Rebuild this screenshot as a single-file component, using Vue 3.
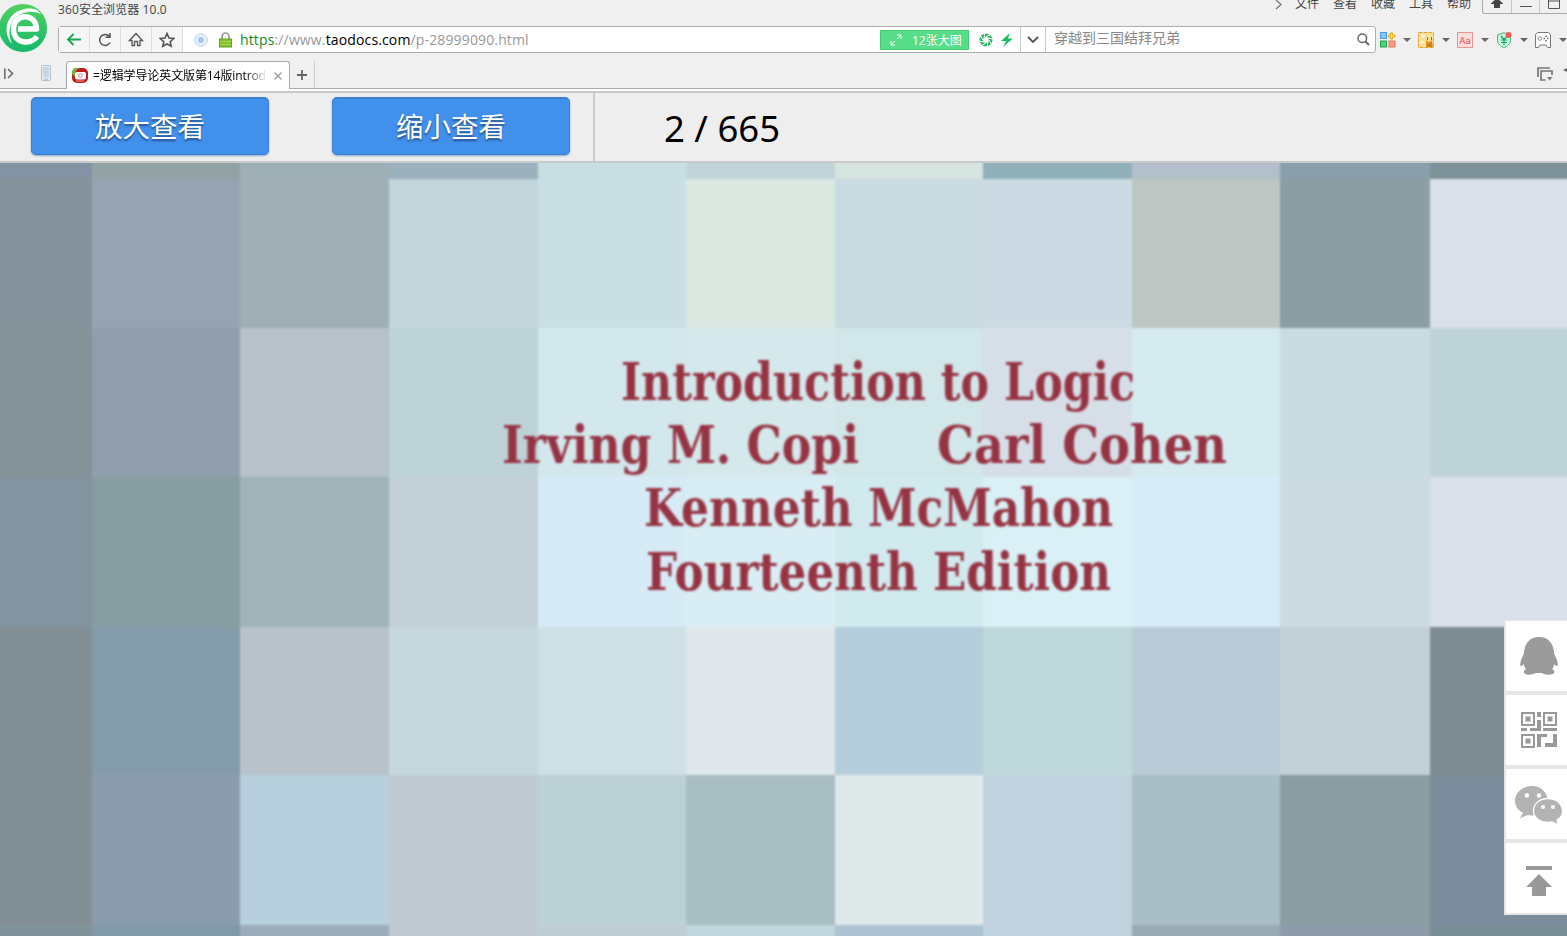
<script setup>
const menus = ["文件", "查看", "收藏", "工具", "帮助"];

// Cover artwork: one array per row, one colour per tile.
const tiles = [
  ["#8493a3", "#93a3a5", "#9fafb6", "#9bb1be", "#c7dfe0", "#c0d3d9", "#d5e4df", "#91b1ba", "#b3bfca", "#899fab", "#7d9299"],
  ["#84939b", "#96a3b1", "#9fafb5", "#c1d5db", "#c9dfe4", "#dae8e1", "#c7dbe0", "#ccdbe3", "#bdc6c3", "#8a9ea3", "#d9e0ea"],
  ["#849398", "#919fad", "#b6c1ca", "#bdd3d8", "#d3e8ec", "#d5e8ec", "#d1e7e9", "#d6dfe8", "#d6ebf0", "#c8dce1", "#bdd3d8"],
  ["#8194a0", "#889da1", "#9fb3b8", "#c3d0d7", "#d7ebf7", "#d8eef4", "#d1eaee", "#d9f1f6", "#d6ecf7", "#ccdbe2", "#dadfea"],
  ["#829095", "#849caa", "#b8c2cb", "#c5d8de", "#cfdfe6", "#e0e7ea", "#b5cedc", "#bed7da", "#b8cbd7", "#c3d0d8", "#7d8b92"],
  ["#829095", "#8b9dad", "#b8d0de", "#c1cad3", "#bcd1d6", "#a9bec3", "#e0e9ea", "#c0d3de", "#aabfc5", "#899da2", "#7b8c9c"],
  ["#80939a", "#8299a9", "#9badb9", "#c1c9d2", "#bfced5", "#c0d5dc", "#adc3d1", "#c0d3df", "#9aabb6", "#8e9ba9", "#788d96"],
];
</script>

<template>
  <div class="browser">
    <header class="chrome">
      <svg class="logo" width="48" height="50" viewBox="0 0 48 50">
        <defs>
          <linearGradient id="lg" x1="0" y1="0" x2="0" y2="1">
            <stop offset="0" stop-color="#4fd160" />
            <stop offset="1" stop-color="#17b86c" />
          </linearGradient>
        </defs>
        <circle cx="23" cy="25" r="24" fill="url(#lg)" />
        <path d="M18 26H36.500C36 9 13 10 13.500 27C14 41 31 42 37 33.500" fill="none" stroke="#fff" stroke-width="5.500" stroke-linejoin="round" />
        <path d="M12 41C1 28 7 8 27 5.500C34 5 39 7 41 11.500C34 7 22 8 14 16C9 22 8 31 12 41Z" fill="#fff" />
      </svg>

      <div class="title-row">
        <span class="title">360安全浏览器 10.0</span>
        <svg class="more" width="8" height="12" viewBox="0 0 8 12"><path d="M1 0L6 4.500L1 9" fill="none" stroke="#777" stroke-width="1.3" /></svg>
        <nav class="menus">
          <span v-for="m in menus" :key="m">{{ m }}</span>
        </nav>
        <div class="win">
          <span><svg width="12" height="10" viewBox="0 0 12 10"><path d="M0 3.500L6-2L12 3.500V4H9V8H3V4H0Z" fill="#444" /></svg></span>
          <span><svg width="13" height="10" viewBox="0 0 13 10"><path d="M0 6.500H12" stroke="#555" /></svg></span>
          <span><svg width="13" height="10" viewBox="0 0 13 10"><path d="M.5-2V8.500H11.500V-2M0 1H12" fill="none" stroke="#555" /></svg></span>
        </div>
      </div>

      <div class="address-row">
        <div class="address">
          <button class="nav-btn">
            <svg width="16" height="16" viewBox="0 0 16 16"><path d="M15 7.500H2M7.500 2L2 7.500L7.500 13" fill="none" stroke="#12a84c" stroke-width="1.800" /></svg>
          </button>
          <button class="nav-btn">
            <svg width="16" height="16" viewBox="0 0 16 16"><path d="M13 10.500A5.500 5.500 0 1 1 12.300 4.300M13 1V5.200H8.500" fill="none" stroke="#555" stroke-width="1.500" /></svg>
          </button>
          <button class="nav-btn">
            <svg width="16" height="16" viewBox="0 0 16 16"><path d="M1.500 8.500L8 1.500L14.500 8.500H12V13.500H9.500V9.500H6.500V13.500H4V8.500Z" fill="none" stroke="#555" stroke-width="1.300" /></svg>
          </button>
          <button class="nav-btn">
            <svg width="16" height="16" viewBox="0 0 16 16"><path d="M8 1.500L10 6L14.700 6.500L11.200 9.700L12.200 14.300L8 12L3.800 14.300L4.800 9.700L1.300 6.500L6 6Z" fill="none" stroke="#555" stroke-width="1.600" /></svg>
          </button>
          <svg class="site" width="14" height="14" viewBox="0 0 14 14">
            <circle cx="7" cy="7" r="6.500" fill="#dfebfd" stroke="#c8dbf8" />
            <circle cx="7" cy="7" r="3.700" fill="#a4c4f7" stroke="#fff" />
          </svg>
          <svg class="lock" width="13" height="16" viewBox="0 0 13 16">
            <path d="M3 8V4.500A3.500 3.500 0 0 1 10 4.500V8" fill="none" stroke="#999" stroke-width="1.700" />
            <rect x=".5" y="7" width="12" height="8" fill="#83c32d" stroke="#649f21" />
            <path d="M1 9.500H12M1 12.500H12" stroke="#a1d653" />
          </svg>
          <span class="url"><i class="secure">https</i>://www.<b>taodocs.com</b>/p-28999090.html</span>
          <span class="tag">
            <svg width="12" height="12" viewBox="0 0 12 12"><path d="M7 1H11V5M11 1L7 5M5 11H1V7M1 11L5 7" fill="none" stroke="#fff" /></svg>
            12张大图
          </span>
          <svg class="swirl" width="14" height="14" viewBox="0 0 14 14">
            <circle cx="7" cy="7" r="4.700" fill="none" stroke="#28b665" stroke-width="3.600" />
            <path d="M5 5L6 0M7 4L12 1M9 5L14 6M10 7L13 12M9 9L8 14M7 10L2 13M5 9L0 8M4 7L1 2" stroke="#fff" stroke-width="1" />
          </svg>
          <svg class="bolt" width="12" height="14" viewBox="0 0 12 14"><path d="M9 0L0 8H5L2 14L12 5.500H7Z" fill="#1fbd68" /></svg>
          <span class="drop">
            <svg width="12" height="8" viewBox="0 0 12 8"><path d="M1 1L6 6L11 1" fill="none" stroke="#555" stroke-width="1.800" /></svg>
          </span>
          <span class="query">穿越到三国结拜兄弟</span>
          <svg class="search" width="13" height="13" viewBox="0 0 13 13"><circle cx="5.300" cy="5.300" r="4.300" fill="none" stroke="#666" stroke-width="1.500" /><path d="M8.500 8.500L12 12" stroke="#666" stroke-width="2" /></svg>
        </div>

        <div class="exts">
          <div class="ext">
            <svg width="16" height="16" viewBox="0 0 16 16">
              <rect x=".5" y=".5" width="6" height="6" fill="#8bc7f5" stroke="#45a0e6" />
              <path d="M10.500 1H12.500V3H15V5H12.500V7H10.500V5H8.500V3H10.500Z" fill="#ffe36a" stroke="#e3a516" />
              <rect x=".5" y="9" width="6" height="6" fill="#58cf7b" stroke="#14a74b" />
              <rect x="9" y="9" width="6" height="6" fill="#f99a86" stroke="#ec705b" />
            </svg>
            <i class="caret" />
          </div>
          <div class="ext">
            <svg width="16" height="16" viewBox="0 0 16 16">
              <rect x=".5" y=".5" width="15" height="15" fill="#fbe09a" stroke="#e4a62a" stroke-dasharray="4 1" />
              <circle cx="5" cy="4" r="1.800" fill="#fff5d0" /><circle cx="4" cy="10" r="1.500" fill="#fff5d0" />
              <path d="M8 15V8L11 10L14 8L15 15Z" fill="#ed9b28" />
              <path d="M9.500 5V8M13.500 5V8M9 11L11 13L14 11M9 14H14" fill="none" stroke="#9c681d" />
            </svg>
            <i class="caret" />
          </div>
          <div class="ext">
            <svg width="16" height="16" viewBox="0 0 16 16">
              <rect x=".5" y=".5" width="15" height="15" fill="#ffdede" stroke="#e99590" />
              <text x="2.200" y="11.700" font-size="9.500" font-family="Roboto, sans-serif" fill="#d94f4f">Aa</text>
            </svg>
            <i class="caret" />
          </div>
          <div class="ext">
            <svg width="16" height="16" viewBox="0 0 16 16">
              <path d="M8 .7L14.500 3V8C14.500 12 11 14.500 8 15.500C5 14.500 1.500 12 1.500 8V3Z" fill="#caf5dc" stroke="#39bf7b" />
              <path d="M5 4L8 7.500L11 4M8 7V13M5 8H11M5 10.500H11" fill="none" stroke="#12a75c" stroke-width="1.200" />
              <circle cx="12.500" cy="3" r="3" fill="#f75959" />
            </svg>
            <i class="caret" />
          </div>
          <div class="ext">
            <svg width="16" height="16" viewBox="0 0 16 16">
              <path d="M2.500.5H13.500L15.500 2.500V15.500H12.500L11 13H5L3.500 15.500H.5V2.500Z" fill="#fff" stroke="#777" />
              <circle cx="4.800" cy="6.500" r="1.800" fill="none" stroke="#888" />
              <path d="M11 3.500V5M11 8V9.500M8.500 6.500H10M12 6.500H13.500" stroke="#666" stroke-width="1.500" />
            </svg>
            <i class="caret" />
          </div>
        </div>
      </div>

      <div class="tab-row">
        <svg class="panel" width="12" height="12" viewBox="0 0 12 12"><path d="M.8.5V11M4 1L8.500 5.500L4 10" fill="none" stroke="#666" stroke-width="1.500" /></svg>
        <svg class="phone" width="10" height="16" viewBox="0 0 10 16">
          <rect x=".5" y=".5" width="9" height="15" rx="1" fill="#e6ebf0" stroke="#b3bfca" />
          <rect x="2" y="2" width="6" height="10" fill="#c4d6e6" />
          <path d="M3 14H7" stroke="#9fb2c4" />
        </svg>
        <div class="tab">
          <svg width="16" height="16" viewBox="0 0 16 16">
            <rect width="16" height="15" rx="5" fill="#bf1a1f" />
            <path d="M0 6V4Q0 0 5 0H8Q2 2 3 9Z" fill="#7cae46" />
            <rect x="3" y="4" width="11" height="7.500" rx="2" fill="#fff" />
            <circle cx="8.500" cy="7.500" r="1.800" fill="#fff" stroke="#e57777" />
            <path d="M5 6H6M11 6H12M4 13H12" stroke="#e99" />
          </svg>
          <span class="tab-title">=逻辑学导论英文版第14版introduction</span>
          <svg class="close" width="8" height="8" viewBox="0 0 8 8"><path d="M.5.5L7.500 7.500M7.500.5L.5 7.500" stroke="#999" stroke-width="1.200" /></svg>
        </div>
        <div class="new-tab">
          <svg width="10" height="10" viewBox="0 0 10 10"><path d="M5 0V10M0 5H10" stroke="#666" stroke-width="1.800" /></svg>
        </div>
        <svg class="restore" width="17" height="15" viewBox="0 0 17 15">
          <path d="M1 10V1H13M8.500 13H4V4H15V8" fill="none" stroke="#777" stroke-width="1.700" />
          <path d="M10 10L15.500 10L12.750 13.500Z" fill="#777" />
        </svg>
        <svg class="undo" width="4" height="8" viewBox="0 0 4 8"><path d="M0 3L4 1V5Z" fill="#666" /></svg>
      </div>
    </header>

    <div class="toolbar">
      <button class="zoom-btn">放大查看</button>
      <button class="zoom-btn">缩小查看</button>
      <div class="pager">2 / 665</div>
    </div>

    <main class="viewer">
      <div class="mosaic">
        <template v-for="(row, r) in tiles" :key="r">
          <div v-for="(color, c) in row" :key="c" :style="{ background: color }" />
        </template>
      </div>
      <svg class="cover-text" width="1567" height="773" viewBox="0 163 1567 773">
        <text x="621" y="400" textLength="514" lengthAdjust="spacingAndGlyphs">Introduction to Logic</text>
        <text x="502" y="463" textLength="357" lengthAdjust="spacingAndGlyphs">Irving M. Copi</text>
        <text x="937" y="463" textLength="290" lengthAdjust="spacingAndGlyphs">Carl Cohen</text>
        <text x="644" y="526" textLength="469" lengthAdjust="spacingAndGlyphs">Kenneth McMahon</text>
        <text x="646" y="590" textLength="465" lengthAdjust="spacingAndGlyphs">Fourteenth Edition</text>
      </svg>
    </main>

    <aside class="side">
      <div class="side-item">
        <svg width="38" height="38" viewBox="0 0 38 38" fill="#9b9b9b">
          <path d="M19 0C28 0 33 6 34 15C34 18 36 20 37 23C38 27 38 29 37 29C36 29 35 28 34 27C34 30 33 31 32 32C34 33 36 35 33 37C29 38 25 38 22 36H16C12 38 8 38 5 37C3 35 4 33 6 32C5 31 4 30 4 27C3 28 2 29 1 29C0 29 0 27 1 23C2 20 4 18 4 15C5 6 10 0 19 0Z" />
        </svg>
      </div>
      <div class="side-item">
        <svg width="36" height="36" viewBox="0 0 36 36">
          <g fill="none" stroke="#999" stroke-width="2">
            <rect x="1" y="1" width="12" height="12" /><rect x="23" y="1" width="12" height="12" /><rect x="1" y="23" width="12" height="12" />
          </g>
          <g fill="#999">
            <rect x="4.500" y="4.500" width="5" height="5" /><rect x="26.500" y="4.500" width="5" height="5" /><rect x="4.500" y="26.500" width="5" height="5" />
            <path d="M16 0H20V5H16ZM16 8H20V19H9V16H16ZM0 16H6V19H0ZM22 16H36V19H22ZM16 22H26V25H20V35H16ZM32 22H36V35H24V31H32Z" />
          </g>
        </svg>
      </div>
      <div class="side-item">
        <svg class="wechat" width="48" height="40" viewBox="0 0 48 40">
          <path d="M17 0C7 0 0 7 0 15C0 20 3 24 8 27L5 32L13 29C27 32 34 23 33 15C32 6 26 0 17 0Z" fill="#b3b3b3" />
          <path d="M33 12.500C24 12.500 18.500 18 18.500 25C18.500 33 28 38 37 36L43.500 39L42 34C46 32 48 28 47.500 24C46.500 17 41 12.500 33 12.500Z" fill="#b3b3b3" stroke="#fff" stroke-width="1.300" />
          <g fill="#fff"><circle cx="12" cy="9.500" r="2.200" /><circle cx="24" cy="9.500" r="2.200" /><circle cx="28" cy="21" r="2" /><circle cx="38" cy="21" r="2" /></g>
        </svg>
      </div>
      <div class="side-item">
        <svg class="to-top" width="26" height="30" viewBox="0 0 26 30"><path d="M0 0H26V4H0ZM13 8L26 21H20V30H6V21H0Z" fill="#999" /></svg>
      </div>
    </aside>
  </div>
</template>

<style>
body {
  margin: 0;
  overflow: hidden;
}
</style>

<style scoped>
.browser {
  position: relative;
  width: 1567px;
  height: 936px;
  overflow: hidden;
  background: #eee;
  font-family: "Open Sans", "Noto Sans CJK SC", sans-serif;
}

svg {
  display: block;
  flex: none;
}

button {
  font: inherit;
  border: 0;
  padding: 0;
}

.chrome {
  height: 91px;
  background: #f0f0f0;
  border-bottom: 2px solid #c9c9c9;
}

.logo {
  position: absolute;
  left: 0;
  top: 3px;
}

.title-row {
  height: 26px;
  display: flex;
  padding-left: 58px;
  font-size: 12px;
  line-height: 18px;
  color: #444;
  white-space: nowrap;
}

.title {
  flex: 1;
  padding-top: 1px;
  letter-spacing: 0.1px;
}

.more {
  margin-right: 12px;
}

.menus {
  display: flex;
  gap: 14px;
  height: 13px;
  line-height: 8px;
  margin-right: 11px;
}

.win {
  display: flex;
  width: 84px;
  height: 13px;
  border: 1px solid #aaa;
  border-width: 0 0 1px 1px;
  border-radius: 0 0 0 3px;
}

.win span {
  box-sizing: border-box;
  width: 28.500px;
  flex: none;
  padding-left: 8px;
  border-right: 1px solid #c5c5c5;
}

.address-row {
  display: flex;
  height: 27px;
  padding-left: 58px;
}

.address {
  box-sizing: border-box;
  width: 1318px;
  height: 27px;
  flex: none;
  display: flex;
  align-items: center;
  border: 1px solid #adadad;
  border-radius: 3px;
  background: #fff;
}

.nav-btn {
  box-sizing: border-box;
  width: 31px;
  height: 25px;
  flex: none;
  display: flex;
  align-items: center;
  justify-content: center;
  background: #f6f6f6;
  border-right: 1px solid #ddd;
}

.site {
  margin-left: 11px;
}

.lock {
  margin: 0 7px 0 11px;
}

.url {
  flex: 1;
  padding-left: 1px;
  font-size: 14px;
  letter-spacing: 0.14px;
  color: #999;
  white-space: nowrap;
}

.url b {
  font-weight: 400;
  color: #000;
}

.secure {
  font-style: normal;
  color: #168b1a;
}

.tag {
  box-sizing: border-box;
  width: 89px;
  height: 20px;
  display: flex;
  align-items: center;
  gap: 10px;
  padding-left: 9px;
  border: 1px solid #42ca73;
  background: #57dc87;
  color: #fff;
  font-size: 12px;
  white-space: nowrap;
}

.swirl {
  margin: 0 8px 0 10px;
}

.bolt {
  margin-right: 7px;
}

.drop {
  box-sizing: border-box;
  width: 26px;
  height: 25px;
  display: flex;
  align-items: center;
  justify-content: center;
  border: 1px solid #ccc;
  border-width: 0 1px;
}

.query {
  width: 303px;
  padding-left: 8px;
  font-size: 14px;
  line-height: 20px;
  margin-top: -3px;
  color: #888;
}

.search {
  margin-right: 5px;
}

.exts {
  display: flex;
  gap: 7px;
  align-items: center;
  padding-left: 4px;
}

.ext {
  display: flex;
  gap: 8px;
  align-items: center;
}

.ext:not(:first-child) svg {
  margin-left: -1px;
  margin-right: 1px;
}

.caret {
  margin-left: -1px;
  margin-right: 1px;
  border: 4px solid transparent;
  border-top-color: #666;
  border-bottom: 0;
}

.tab-row {
  box-sizing: border-box;
  height: 38px;
  display: flex;
  padding-top: 8px;
  background: linear-gradient(#aaa, #aaa) 0 35px / 100% 1px no-repeat,
    linear-gradient(#fff, #fff) 0 36px / 100% 2px no-repeat;
}

.panel {
  margin: 7px 27px 0 4px;
}

.phone {
  margin: 4px 15px 0 -2px;
}

.tab {
  box-sizing: border-box;
  width: 224px;
  height: 28px;
  padding: 0 7px 0 5px;
  display: flex;
  align-items: center;
  border: 1px solid #aaa;
  border-bottom: 0;
  border-radius: 3px 3px 0 0;
  background: #fff;
}

.tab-title {
  width: 174px;
  margin: -2px 7px 0 5px;
  overflow: hidden;
  font-size: 12px;
  letter-spacing: -0.1px;
  white-space: nowrap;
  color: #000;
  mask-image: linear-gradient(90deg, #000 88%, transparent);
}

.new-tab {
  width: 24px;
  height: 27px;
  display: flex;
  align-items: center;
  justify-content: center;
  border-right: 1px solid #ccc;
}

.restore {
  margin: 6px 9px 0 auto;
}

.undo {
  margin-top: 6px;
}

.toolbar {
  box-sizing: border-box;
  height: 70px;
  display: flex;
  padding: 4px 0 0 31px;
  background: #eee;
  border-bottom: 2px solid #c9c9c9;
}

.zoom-btn {
  box-sizing: border-box;
  width: 238px;
  height: 58px;
  margin-right: 63px;
  border: 1px solid #3c80cf;
  border-top-width: 2px;
  border-radius: 5px;
  background: #4190ec;
  box-shadow: 0 1px 2px #8ba9cc;
  color: #fff;
  font-size: 27.500px;
  line-height: 54px;
  text-shadow: 0 2px 2px #24528b;
}

.zoom-btn + .zoom-btn {
  margin-right: 23px;
}

.pager {
  margin-top: -4px;
  padding-left: 69px;
  border-left: 2px solid #c9c9c9;
  font-family: "Noto Sans", sans-serif;
  font-size: 36.500px;
  line-height: 70px;
  height: 68px;
  color: #000;
}

.viewer {
  position: relative;
  height: 773px;
  overflow: hidden;
}

/* Outer tiles run 4px past the viewer so the blur leaves no pale rim. */
.mosaic {
  display: grid;
  grid-template-columns: 96px 148px 149px 149px 148px 149px 148px 149px 148px 150px 141px;
  grid-template-rows: 20px 149px 149px 150px 148px 150px 15px;
  width: 1575px;
  margin: -4px;
  filter: blur(1.2px);
}

.cover-text {
  position: absolute;
  left: 0;
  top: 0;
  filter: blur(1px);
}

.cover-text text {
  font-family: "DejaVu Serif", serif;
  font-size: 52px;
  font-weight: 700;
  fill: #963342;
}

.side {
  position: absolute;
  right: 0;
  top: 620px;
  box-sizing: border-box;
  width: 63px;
  height: 295px;
  display: flex;
  flex-direction: column;
  gap: 4px;
  padding: 1px 0 2px 2px;
  background: #e6e6e6;
}

.side-item {
  height: 70px;
  display: flex;
  align-items: center;
  justify-content: center;
  padding-left: 5px;
  background: #fff;
}

.wechat {
  margin-top: 3px;
}

.to-top {
  margin-top: 6px;
  margin-right: 1px;
}
</style>
